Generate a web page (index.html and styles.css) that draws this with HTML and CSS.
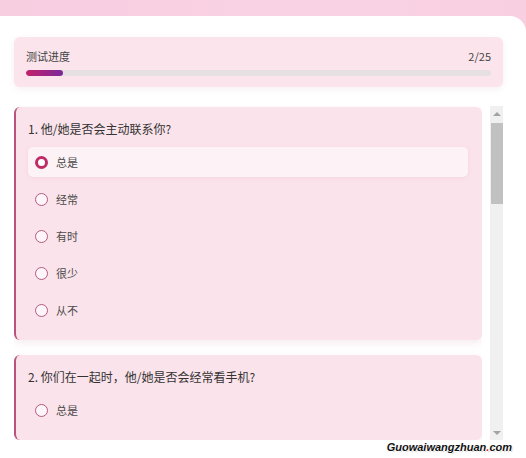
FILE: index.html
```html
<!DOCTYPE html>
<html lang="zh-CN">
<head>
  <meta charset="UTF-8">
  <title>恋爱测试</title>
  <link rel="stylesheet" href="styles.css">
</head>
<body>
  <div class="sheet">
    <div class="progress-box">
      <div class="progress-head">
        <span>测试进度</span>
        <span>2/25</span>
      </div>
      <div class="progress-track"><div class="progress-fill" style="width: 8%;"></div></div>
    </div>

    <div class="scroll-area">
      <div class="questions">
        <div class="question">
          <div class="q-title">1. 他/她是否会主动联系你?</div>
          <div class="options">
            <label class="option selected"><input type="radio" name="q1" checked><span>总是</span></label>
            <label class="option"><input type="radio" name="q1"><span>经常</span></label>
            <label class="option"><input type="radio" name="q1"><span>有时</span></label>
            <label class="option"><input type="radio" name="q1"><span>很少</span></label>
            <label class="option"><input type="radio" name="q1"><span>从不</span></label>
          </div>
        </div>

        <div class="question">
          <div class="q-title">2. 你们在一起时，他/她是否会经常看手机?</div>
          <div class="options">
            <label class="option"><input type="radio" name="q2"><span>总是</span></label>
          </div>
        </div>
      </div>

      <div class="scrollbar">
        <div class="sb-btn up"></div>
        <div class="sb-track"><div class="sb-thumb"></div></div>
        <div class="sb-btn down"></div>
      </div>
    </div>
  </div>

  <div class="watermark">Guowaiwangzhuan<b>.</b>com</div>
</body>
</html>
```

FILE: styles.css
```css
html, body {
  margin: 0;
  height: 100%;
}
body {
  font-family: "Noto Sans CJK SC", "Noto Sans", sans-serif;
  color: #333;
  background: linear-gradient(90deg, #f7cde0, #f9d3e4 60%, #f8cfe1);
  padding-top: 16px;
  box-sizing: border-box;
  overflow: hidden;
  position: relative;
}
.sheet {
  background-color: #fff;
  border-radius: 0 16px 0 0;
  padding: 21px 23px 0 14px;
  height: 100%;
  box-sizing: border-box;
}
.progress-box {
  background-color: #fbe4ec;
  border-radius: 6px;
  padding: 11px 12px;
  box-shadow: 0 2px 6px rgba(200, 120, 150, 0.12);
}
.progress-head {
  display: flex;
  justify-content: space-between;
  font-size: 11px;
  line-height: 16px;
  color: #444;
  margin-bottom: 6px;
}
.progress-track {
  height: 6px;
  background-color: #e6e0e2;
  border-radius: 3px;
  overflow: hidden;
}
.progress-fill {
  height: 100%;
  background: linear-gradient(90deg, #c4206a, #7a2a9a);
  border-radius: 3px;
}
.scroll-area {
  display: flex;
  gap: 8px;
  margin-top: 19px;
  height: 334px;
}
.questions {
  flex: 1;
  overflow: hidden;
  padding-top: 1px;
}
.question {
  margin-bottom: 15px;
  background-color: #fbe3eb;
  border-left: 2px solid #b9527d;
  border-radius: 6px;
  padding: 14px 14px 15px 12px;
  box-shadow: 0 3px 8px rgba(190, 110, 140, 0.14);
}
.q-title {
  font-size: 12px;
  line-height: 16px;
  color: #333;
  margin-bottom: 10px;
}
.options {
  display: flex;
  flex-direction: column;
  gap: 7px;
}
.option {
  display: flex;
  align-items: center;
  gap: 8px;
  height: 30px;
  padding-left: 7px;
  border-radius: 5px;
  font-size: 11px;
  color: #4a4a4a;
  cursor: pointer;
}
.option.selected {
  background-color: #fdf2f6;
  box-shadow: 0 1px 4px rgba(200, 120, 150, 0.12);
}
.option input {
  appearance: none;
  -webkit-appearance: none;
  margin: 0;
  width: 13px;
  height: 13px;
  border: 1px solid #b45a80;
  border-radius: 50%;
  background-color: #fdf5f8;
  box-sizing: border-box;
}
.option input:checked {
  border: 3px solid #c02c66;
  background-color: #fff;
}
.scrollbar {
  width: 13px;
  display: flex;
  flex-direction: column;
  background-color: #f0f0f0;
}
.sb-btn {
  height: 15px;
  display: flex;
  align-items: center;
  justify-content: center;
}
.sb-btn::before {
  content: "";
  border-left: 4px solid transparent;
  border-right: 4px solid transparent;
}
.sb-btn.up::before {
  border-bottom: 4px solid #a3a3a3;
}
.sb-btn.down::before {
  border-top: 4px solid #a3a3a3;
}
.sb-track {
  flex: 1;
  padding: 2px 0 0 1px;
}
.sb-thumb {
  height: 81px;
  background-color: #c1c1c1;
}
.watermark {
  position: absolute;
  right: 14px;
  bottom: 5px;
  font-family: "Liberation Sans", sans-serif;
  font-size: 11px;
  font-weight: bold;
  font-style: italic;
  color: #111;
  text-shadow: 1px 0 0 #fff, -1px 0 0 #fff, 0 1px 0 #fff, 0 -1px 0 #fff, 1px 1px 1px #bbb;
}
.watermark b {
  color: #d8283c;
}
```
